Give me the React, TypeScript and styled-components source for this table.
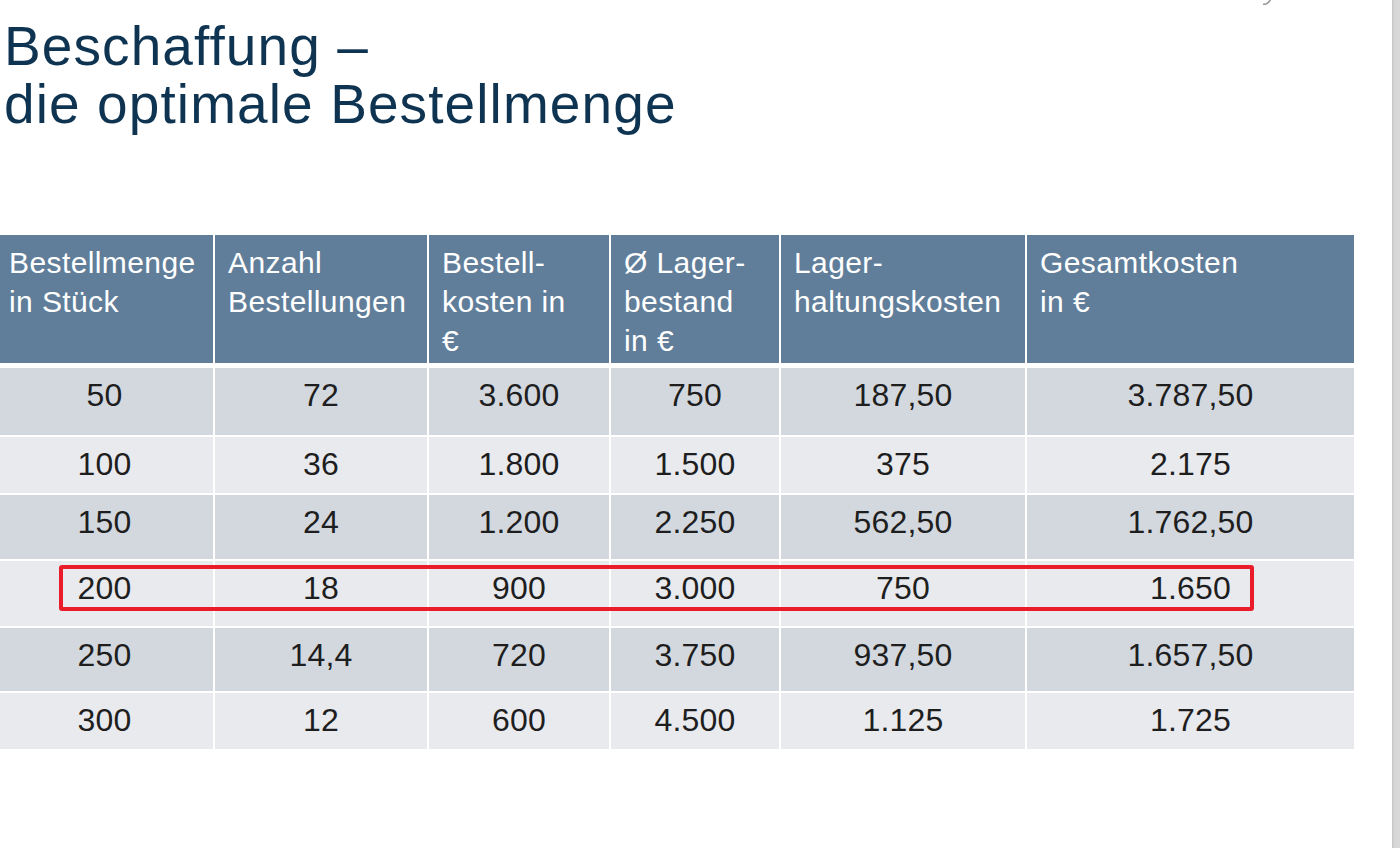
import React from 'react';
import styled, { createGlobalStyle } from 'styled-components';

const GlobalStyle = createGlobalStyle`
  html, body {
    margin: 0;
    padding: 0;
    background: #ffffff;
    overflow: hidden;
  }
  body {
    font-family: "Liberation Sans", Arial, Helvetica, sans-serif;
  }
`;

type Row = { h: number; cells: string[] };

const columns = [217, 212, 180, 168, 244, 327];

const headers = [
  ['Bestellmenge', 'in Stück'],
  ['Anzahl', 'Bestellungen'],
  ['Bestell-', 'kosten in', '€'],
  ['Ø Lager-', 'bestand', 'in €'],
  ['Lager-', 'haltungskosten'],
  ['Gesamtkosten', 'in €'],
];

const rows: Row[] = [
  { h: 67, cells: ['50', '72', '3.600', '750', '187,50', '3.787,50'] },
  { h: 56, cells: ['100', '36', '1.800', '1.500', '375', '2.175'] },
  { h: 64, cells: ['150', '24', '1.200', '2.250', '562,50', '1.762,50'] },
  { h: 65, cells: ['200', '18', '900', '3.000', '750', '1.650'] },
  { h: 63, cells: ['250', '14,4', '720', '3.750', '937,50', '1.657,50'] },
  { h: 56, cells: ['300', '12', '600', '4.500', '1.125', '1.725'] },
];

const App = () => {
  return (
    <Page>
      <GlobalStyle />
      <Slide>
        <CornerMark width="12" height="5" viewBox="0 0 12 5">
          <path d="M1 4.2 Q5 5 8.5 0" fill="none" stroke="#9a9a9a" strokeWidth="1.6" />
        </CornerMark>
        <Title>
          Beschaffung –<br />
          die optimale Bestellmenge
        </Title>
        <TableWrap>
          <CostTable>
            <colgroup>
              {columns.map((w, i) => (
                <col key={i} style={{ width: w }} />
              ))}
            </colgroup>
            <thead>
              <tr>
                {headers.map((lines, i) => (
                  <HeadCell key={i}>
                    {lines.map((l, j) => (
                      <React.Fragment key={j}>
                        {j > 0 && <br />}
                        {l}
                      </React.Fragment>
                    ))}
                  </HeadCell>
                ))}
              </tr>
            </thead>
            <tbody>
              {rows.map((r, i) => (
                <BodyRow key={i} $h={r.h} $odd={i % 2 === 0}>
                  {r.cells.map((c, j) => (
                    <Cell key={j}>{c}</Cell>
                  ))}
                </BodyRow>
              ))}
            </tbody>
          </CostTable>
          <Highlight />
        </TableWrap>
      </Slide>
      <EdgeStrip />
    </Page>
  );
};

export default App;

const Page = styled.div`
  display: flex;
  width: 1400px;
  height: 848px;
  overflow: hidden;
`;

const Slide = styled.div`
  position: relative;
  flex: 1;
  padding-top: 17px;
  background: #ffffff;
`;

const CornerMark = styled.svg`
  position: absolute;
  top: 0;
  left: 1262px;
`;

const Title = styled.h1`
  margin: 0 0 0 4px;
  font-weight: normal;
  font-size: 55px;
  line-height: 58px;
  letter-spacing: 1.1px;
  color: #0e3452;
`;

const TableWrap = styled.div`
  position: relative;
  margin: 100px 0 0 -6px;
  width: 1362px;
`;

const CostTable = styled.table`
  table-layout: fixed;
  border-collapse: separate;
  border-spacing: 2px;
  width: 1362px;
`;

const HeadCell = styled.th`
  box-sizing: border-box;
  height: 131px;
  padding: 8px 4px 0 13px;
  vertical-align: top;
  text-align: left;
  font-weight: normal;
  font-size: 30px;
  line-height: 39px;
  letter-spacing: 0.4px;
  color: #ffffff;
  background: #607e9a;
  border-bottom: 3px solid #ffffff;
  white-space: nowrap;
`;

const BodyRow = styled.tr<{ $h: number; $odd: boolean }>`
  height: ${(p) => p.$h}px;
  background: ${(p) => (p.$odd ? '#d3d8df' : '#e9eaee')};
`;

const Cell = styled.td`
  box-sizing: border-box;
  padding: 8px 0 0;
  vertical-align: top;
  text-align: center;
  font-size: 32px;
  line-height: 38px;
  letter-spacing: 0.2px;
  color: #1e1e1e;
`;

const Highlight = styled.div`
  position: absolute;
  left: 65px;
  top: 332px;
  width: 1195px;
  height: 46px;
  box-sizing: border-box;
  border: 4px solid #ea1c2a;
  border-radius: 3px;
  pointer-events: none;
`;

const EdgeStrip = styled.div`
  width: 8px;
  height: 100%;
  background: linear-gradient(to right, #c4c4c4 0, #d6d6d6 25%, #dadada 100%);
`;
